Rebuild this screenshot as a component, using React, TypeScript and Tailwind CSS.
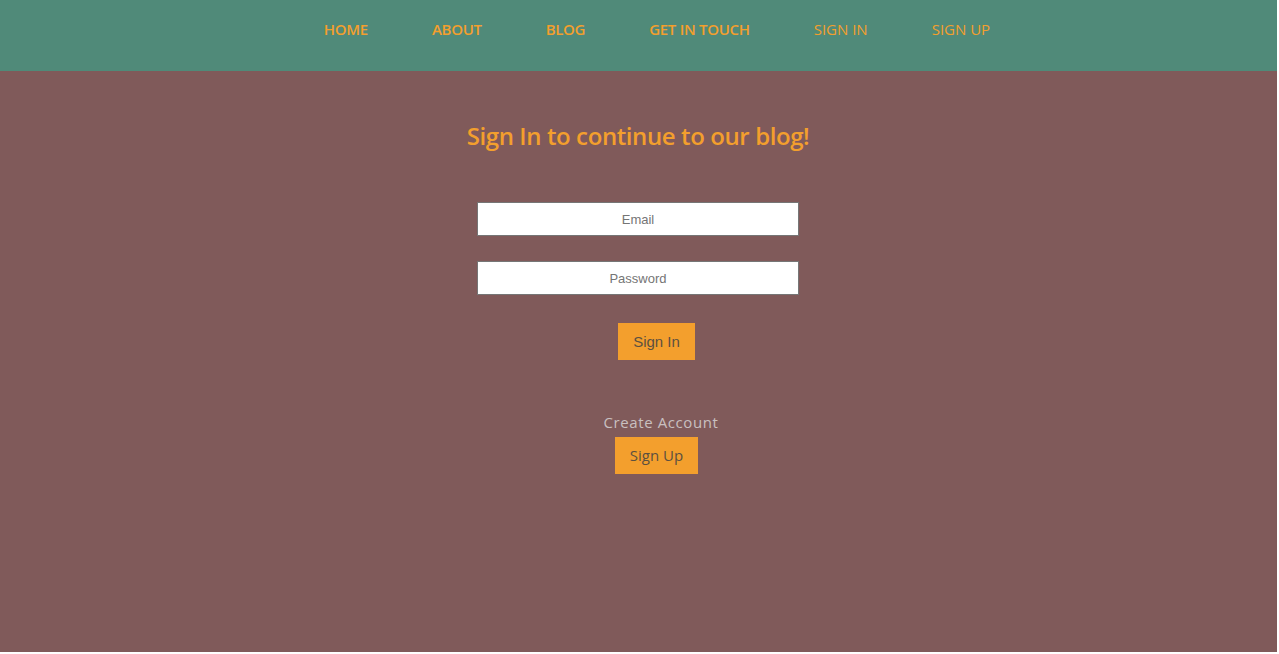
export default function App() {
  const font = { fontFamily: "'Open Sans', 'Liberation Sans', sans-serif" };
  return (
    <div className="w-[1277px] h-[652px] bg-[#805a5a] flex flex-col" style={font}>
      <nav className="h-[71px] bg-[#508a79] flex items-start justify-center pt-[19px] pl-[37px] gap-[64px] text-[15px] text-[#f39f2d] leading-[20px]">
        <span className="font-semibold tracking-[-0.3px]">HOME</span>
        <span className="font-semibold tracking-[-0.3px]">ABOUT</span>
        <span className="font-semibold tracking-[-0.3px]">BLOG</span>
        <span className="font-semibold tracking-[-0.3px]">GET IN TOUCH</span>
        <span className="font-normal">SIGN IN</span>
        <span className="font-normal">SIGN UP</span>
      </nav>
      <main className="flex flex-col items-center">
        <h1 className="mt-[49px] text-[24px] leading-[32px] font-semibold text-[#f39f2d] tracking-[-0.4px] ml-[-1px]">
          Sign In to continue to our blog!
        </h1>
        <input
          placeholder="Email"
          className="mt-[50px] w-[322px] h-[34px] bg-white border border-[#767676] text-center text-[13px] placeholder:text-[#757575] ml-[-1px]"
          style={{ fontFamily: "'Liberation Sans', Arial, sans-serif" }}
        />
        <input
          placeholder="Password"
          type="password"
          className="mt-[25px] w-[322px] h-[34px] bg-white border border-[#767676] text-center text-[13px] placeholder:text-[#757575] ml-[-1px]"
          style={{ fontFamily: "'Liberation Sans', Arial, sans-serif" }}
        />
        <button
          className="mt-[28px] w-[77px] h-[37px] bg-[#f39f2d] text-[#5b5040] text-[15px] leading-[38px] ml-[36px]"
          style={{ fontFamily: "'Liberation Sans', Arial, sans-serif" }}
        >
          Sign In
        </button>
        <div className="mt-[52px] text-[15px] leading-[20px] text-[#c9c0c0] ml-[45px] tracking-[0.6px]">Create Account</div>
        <button className="mt-[5px] w-[83px] h-[37px] bg-[#f39f2d] text-[#5b5040] text-[15px] ml-[36px]">
          Sign Up
        </button>
      </main>
    </div>
  );
}
